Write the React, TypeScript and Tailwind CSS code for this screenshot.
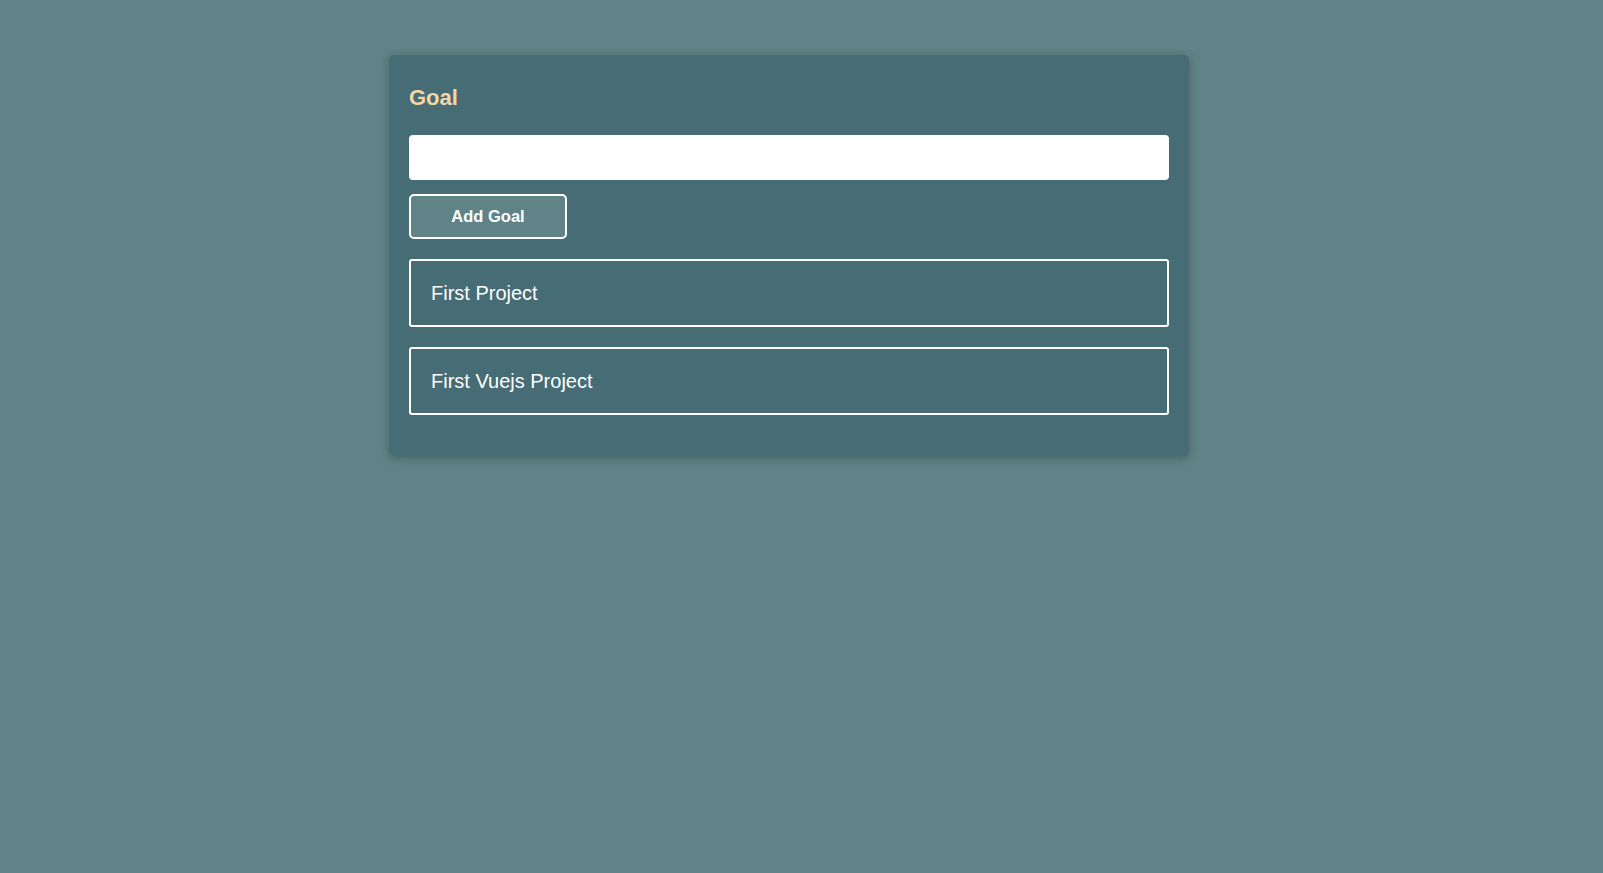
const goals = ['First Project', 'First Vuejs Project'];

export default function App() {
  return (
    <div className="min-h-[873px] bg-[#5f8386] pt-[55px] font-['Liberation_Sans',Arial,sans-serif]">
      <div className="ml-[389px] w-[800px] rounded-[5px] bg-[#466c76] px-5 pt-[29px] pb-[21px] shadow-[0_2px_10px_rgba(0,0,0,0.25)]">
        <h2 className="text-[22px] leading-[28px] font-bold text-[#f3d7a7]">Goal</h2>
        <input
          type="text"
          className="mt-[23px] block h-[45px] w-full rounded-[4px] bg-white px-3 text-base text-gray-800 outline-none"
        />
        <button className="mt-[14px] block h-[45px] w-[158px] rounded-[5px] border-2 border-white bg-[#5f8386] text-[16.5px] font-bold text-white">
          Add Goal
        </button>
        <ul className="mt-[20px]">
          {goals.map((g) => (
            <li
              key={g}
              className="mb-5 rounded-[3px] border-2 border-white px-5 pt-[21px] pb-5 text-[20px] leading-[23px] text-white"
            >
              {g}
            </li>
          ))}
        </ul>
      </div>
    </div>
  );
}
